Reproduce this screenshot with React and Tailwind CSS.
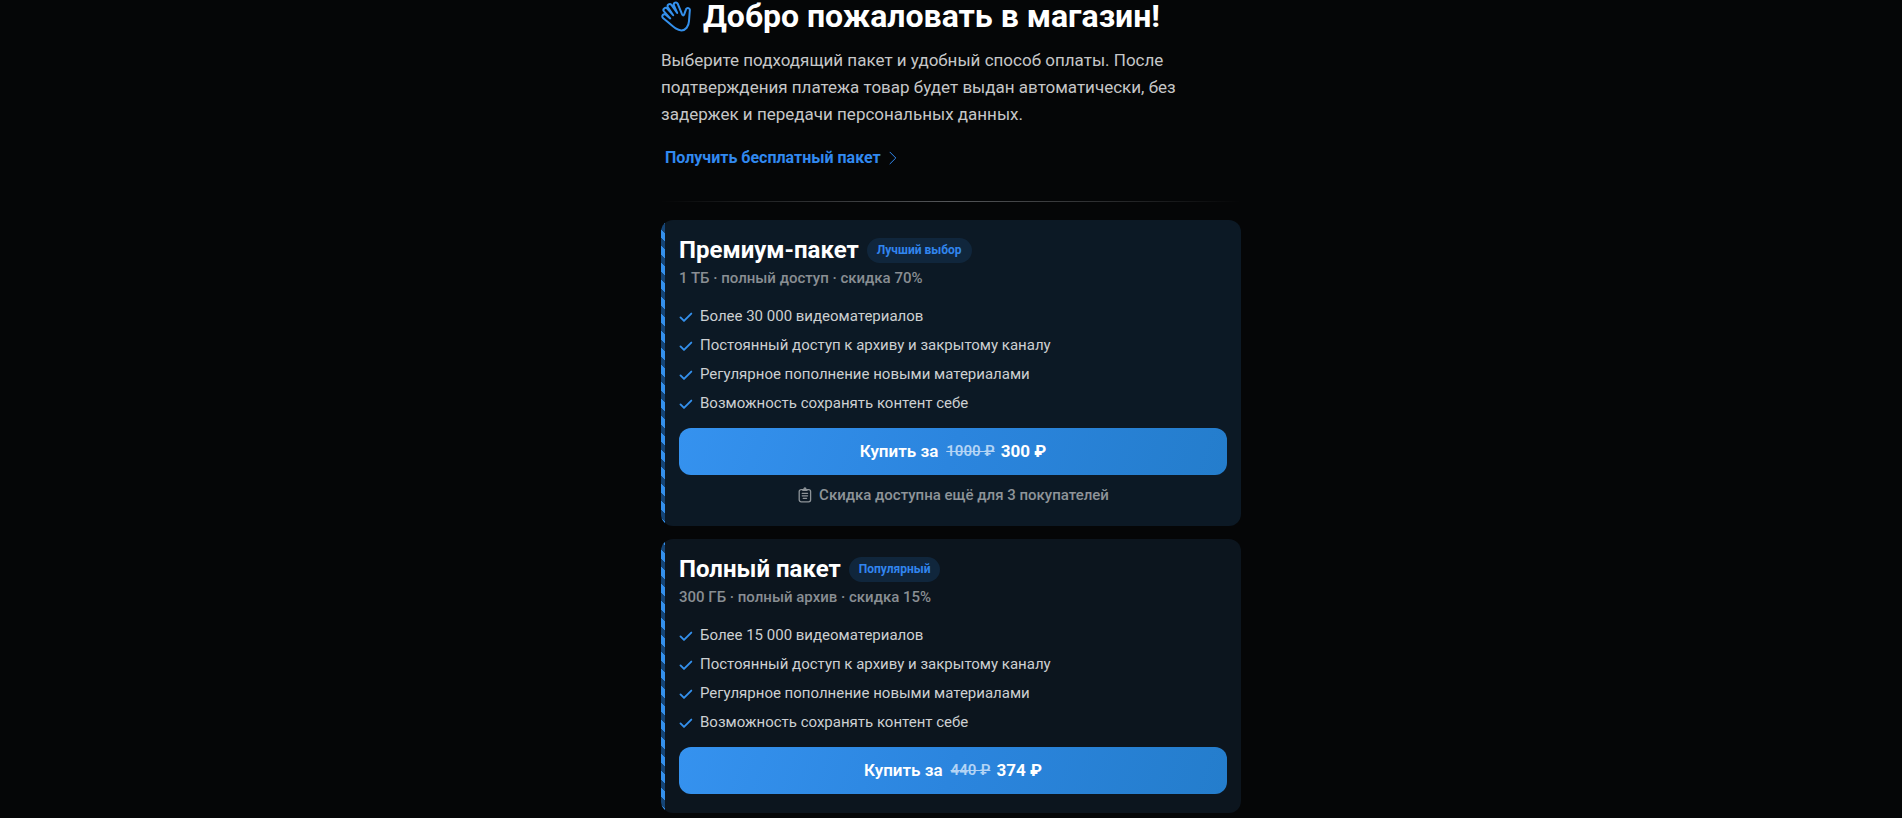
const packages = [
  {
    id: "premium",
    title: "Премиум-пакет",
    badge: "Лучший выбор",
    subtitle: "1 ТБ · полный доступ · скидка 70%",
    features: [
      "Более 30 000 видеоматериалов",
      "Постоянный доступ к архиву и закрытому каналу",
      "Регулярное пополнение новыми материалами",
      "Возможность сохранять контент себе",
    ],
    oldPrice: "1000 ₽",
    price: "300 ₽",
    note: "Скидка доступна ещё для 3 покупателей",
    background: "bg-[#0c1925]",
  },
  {
    id: "full",
    title: "Полный пакет",
    badge: "Популярный",
    subtitle: "300 ГБ · полный архив · скидка 15%",
    features: [
      "Более 15 000 видеоматериалов",
      "Постоянный доступ к архиву и закрытому каналу",
      "Регулярное пополнение новыми материалами",
      "Возможность сохранять контент себе",
    ],
    oldPrice: "440 ₽",
    price: "374 ₽",
    background: "bg-[#0c151e]",
  },
];

function HandIcon() {
  return (
    <svg className="h-8 w-[30px] shrink-0 text-[#3490ec]" viewBox="0 0 30 32" fill="none" stroke="currentColor" strokeWidth="2" strokeLinecap="round" strokeLinejoin="round" aria-hidden="true">
      <path d="M7.4 22.6 2 18a2.1 2.1 0 0 1 2.8-3.2L9.2 18.4 3 11.4A2.1 2.1 0 0 1 6.2 8.6L12.2 15.2 6.9 7.2A2.1 2.1 0 0 1 10.4 4.9L16.2 13 12.8 5.2A2.1 2.1 0 0 1 16.6 3.5L20.6 13.2C21.3 15.6 22.6 16.2 23.3 14.2L24.9 9.6A2 2 0 0 1 28.8 10.6L28 21.2C27.7 26.4 24.6 30.4 20.4 30.4 16.4 30.4 13.4 27.8 7.4 22.6Z" />
    </svg>
  );
}

function CheckIcon() {
  return (
    <svg className="size-3.5 shrink-0 text-[#3490ec]" viewBox="0 0 14 14" fill="none" aria-hidden="true">
      <path d="M1.5 7.4 5 10.9 12.3 3.6" stroke="currentColor" strokeWidth="1.9" strokeLinecap="round" strokeLinejoin="round" />
    </svg>
  );
}

function ChevronIcon() {
  return (
    <svg className="h-3.5 w-2" viewBox="0 0 8 14" fill="none" aria-hidden="true">
      <path d="M1 1.2 6.8 7 1 12.8" stroke="currentColor" strokeWidth="1" strokeLinecap="round" strokeLinejoin="round" />
    </svg>
  );
}

function ClipboardIcon() {
  return (
    <svg className="size-4" viewBox="0 0 16 16" fill="none" stroke="currentColor" strokeLinecap="round" strokeLinejoin="round" aria-hidden="true">
      <rect x="2.2" y="2.6" width="11.4" height="12.2" rx="2" strokeWidth="1.3" />
      <path d="M5.8 3.2h4.2M6.9 2.4c0-1.8 2-1.8 2 0" strokeWidth="1.4" />
      <path d="M5.2 6.3h5.4M5.2 8.8h5.4M6.2 11.3h3.4" strokeWidth="1.3" />
    </svg>
  );
}

function PackageCard({ item }) {
  return (
    <article className={`flex overflow-hidden rounded-xl ${item.background}`}>
      <div className="w-1 shrink-0 bg-[repeating-linear-gradient(45deg,#3490ec_0_6px,#154475_6px_12px)]" />
      <div className="min-w-0 flex-1 px-3.5 pt-4 pb-[19px]">
        <div className="flex items-center gap-2">
          <h2 className="text-2xl leading-7 font-bold text-white">{item.title}</h2>
          <span className="rounded-full bg-[#10263c] px-2.5 text-xs leading-[25px] font-bold text-[#3185ee]">
            {item.badge}
          </span>
        </div>
        <p className="mt-0.5 text-[15px] leading-6 font-medium text-[#898e93]">{item.subtitle}</p>

        <ul className="mt-3.5 flex flex-col gap-1 text-[15px] leading-[25px] text-[#cdd0d2]">
          {item.features.map((feature) => (
            <li key={feature} className="flex items-center gap-[7px]">
              <CheckIcon />
              {feature}
            </li>
          ))}
        </ul>

        <button
          type="button"
          className="mt-3 flex h-[47px] w-full items-center justify-center rounded-xl bg-linear-110 from-[#3592ef] via-[#2b85de] to-[#247dcc] text-[17px] font-semibold text-white"
        >
          Купить за
          <s className="mr-1.5 ml-2 text-[15px] text-[#b3d4f5]">{item.oldPrice}</s>
          <span className="font-bold">{item.price}</span>
        </button>

        {item.note && (
          <p className="mt-2 flex items-center justify-center gap-1.5 text-[15px] leading-6 font-medium text-[#8e9499]">
            <ClipboardIcon />
            {item.note}
          </p>
        )}
      </div>
    </article>
  );
}

export default function App() {
  return (
    <main className="min-h-screen bg-[#050607] font-[Roboto,sans-serif]">
      <div className="mx-auto max-w-[580px]">
        <header>
          <h1 className="flex items-center gap-3 text-[32px] leading-8 font-bold text-white">
            <HandIcon />
            Добро пожаловать в магазин!
          </h1>
          <p className="mt-[15px] max-w-[540px] text-[17px] leading-[27px] text-[#c6c7c8]">
            Выберите подходящий пакет и удобный способ оплаты. После подтверждения платежа товар
            будет выдан автоматически, без задержек и передачи персональных данных.
          </p>
          <a
            href="#free"
            className="mt-4 ml-1 inline-flex items-center gap-2 text-base leading-7 font-bold text-[#3189f0]"
          >
            Получить бесплатный пакет
            <ChevronIcon />
          </a>
        </header>

        <div className="mt-[29px] mb-[18px] h-px bg-linear-to-r from-transparent via-[#55575a] to-transparent" />

        <section className="flex flex-col gap-[13px]" aria-label="Пакеты">
          {packages.map((item) => (
            <PackageCard key={item.id} item={item} />
          ))}
        </section>
      </div>
    </main>
  );
}
